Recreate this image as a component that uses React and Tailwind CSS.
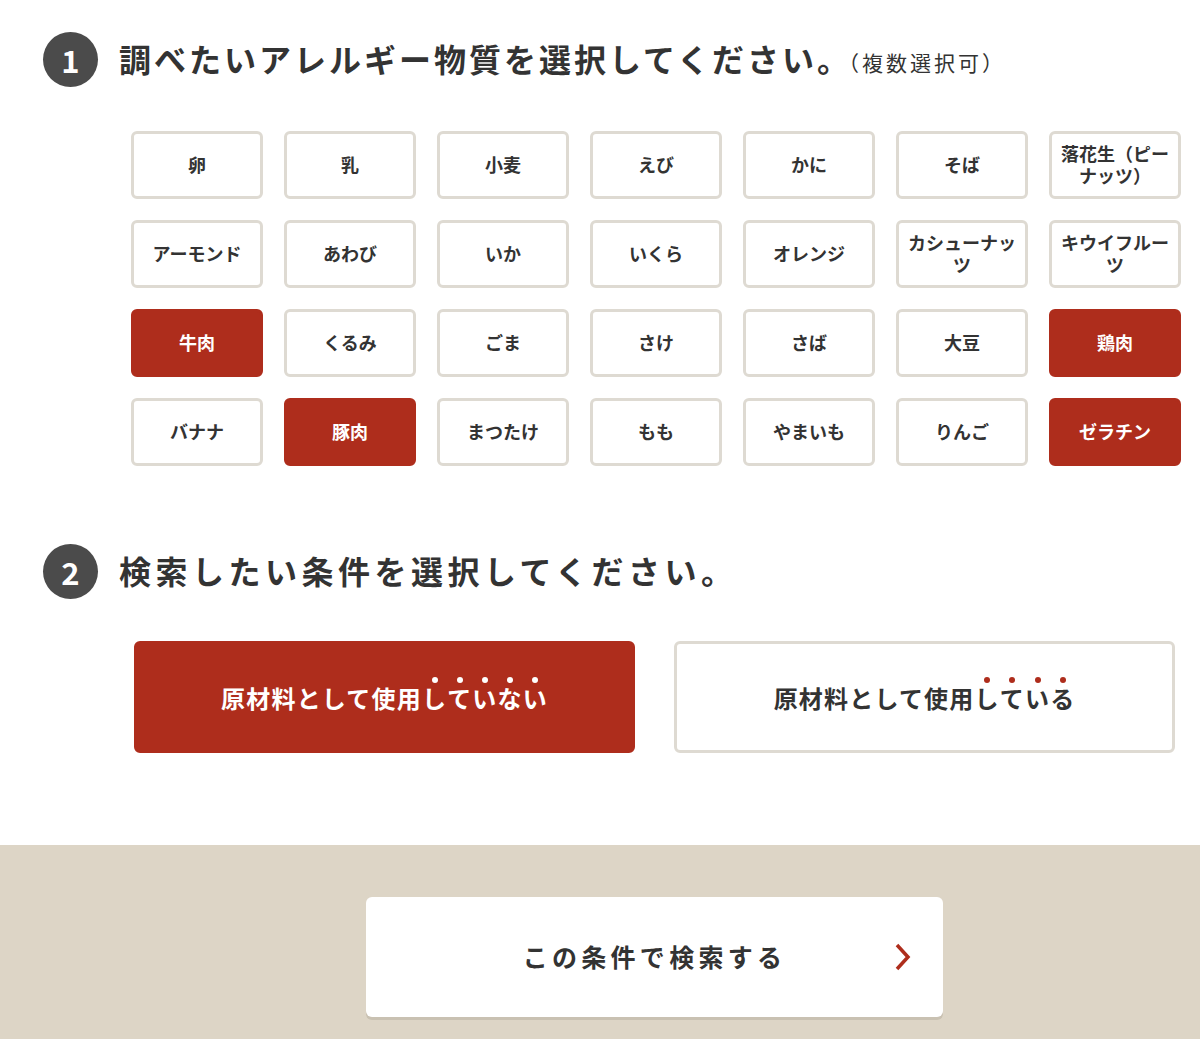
import React, { useState } from 'react';

const FONT = { fontFamily: '"Noto Sans CJK JP", "Noto Sans", sans-serif' };

const ALLERGENS = [
  '卵', '乳', '小麦', 'えび', 'かに', 'そば', '落花生（ピーナッツ）',
  'アーモンド', 'あわび', 'いか', 'いくら', 'オレンジ', 'カシューナッツ', 'キウイフルーツ',
  '牛肉', 'くるみ', 'ごま', 'さけ', 'さば', '大豆', '鶏肉',
  'バナナ', '豚肉', 'まつたけ', 'もも', 'やまいも', 'りんご', 'ゼラチン',
];

// Step number badge
const StepBadge = ({ n }) => (
  <div className="w-[55px] h-[55px] rounded-full bg-[#4b4b4b] text-white flex items-center justify-center text-[31px] font-bold shrink-0 leading-none">
    {n}
  </div>
);

// Text with emphasis dots above the last chars
const Dotted = ({ plain, dotted, dotColor }) => (
  <>
    {plain}
    {dotted.split('').map((ch, i) => (
      <span key={i} className="relative inline-block">
        <span className={`absolute left-1/2 -translate-x-1/2 -top-[3px] w-[6px] h-[6px] rounded-full ${dotColor}`} />
        {ch}
      </span>
    ))}
  </>
);

const App = () => {
  const [selected, setSelected] = useState(['牛肉', '鶏肉', '豚肉', 'ゼラチン']);
  const [mode, setMode] = useState('not');

  const toggle = (name) =>
    setSelected((s) => (s.includes(name) ? s.filter((x) => x !== name) : [...s, name]));

  return (
    <div className="w-[1200px] bg-white text-[#333]" style={FONT}>
      {/* Step 1 */}
      <div className="pt-[32px] pl-[43px] flex items-center gap-[21px]">
        <StepBadge n="1" />
        <h2 className="text-[32px] font-bold tracking-[3px] leading-none flex items-end pb-[3px]">
          調べたいアレルギー物質を選択してください。
          <span className="text-[21px] font-normal tracking-[3px] ml-[-14px] mb-[1px]">（複数選択可）</span>
        </h2>
      </div>

      <div className="mt-[44px] ml-[131px] grid grid-cols-[repeat(7,132px)] gap-x-[21px] gap-y-[21px]">
        {ALLERGENS.map((name) => {
          const on = selected.includes(name);
          return (
            <button
              key={name}
              onClick={() => toggle(name)}
              className={`h-[68px] rounded-[6px] border-[3px] px-[7px] pb-[3px] flex items-center justify-center text-center text-[18px] font-bold leading-[22px] ${
                on ? 'bg-[#ae2d1c] border-[#ae2d1c] text-white' : 'bg-white border-[#dedad2] text-[#333]'
              }`}
            >
              {name}
            </button>
          );
        })}
      </div>

      {/* Step 2 */}
      <div className="mt-[78px] pl-[43px] flex items-center gap-[21px]">
        <StepBadge n="2" />
        <h2 className="text-[32px] font-bold tracking-[4.5px] leading-none pb-[3px]">検索したい条件を選択してください。</h2>
      </div>

      <div className="mt-[42px] ml-[134px] mr-[25px] grid grid-cols-2 gap-x-[39px]">
        <button
          onClick={() => setMode('not')}
          className={`h-[112px] rounded-[6px] border-[3px] flex items-center justify-center text-[24px] font-bold tracking-[1.2px] pt-[2px] ${
            mode === 'not' ? 'bg-[#ae2d1c] border-[#ae2d1c] text-white' : 'bg-white border-[#dedad2] text-[#333]'
          }`}
        >
          <span>
            <Dotted plain="原材料として使用" dotted="していない" dotColor={mode === 'not' ? 'bg-white' : 'bg-[#ae2d1c]'} />
          </span>
        </button>
        <button
          onClick={() => setMode('use')}
          className={`h-[112px] rounded-[6px] border-[3px] flex items-center justify-center text-[24px] font-bold tracking-[1.2px] pt-[2px] ${
            mode === 'use' ? 'bg-[#ae2d1c] border-[#ae2d1c] text-white' : 'bg-white border-[#dedad2] text-[#333]'
          }`}
        >
          <span>
            <Dotted plain="原材料として使用" dotted="している" dotColor={mode === 'use' ? 'bg-white' : 'bg-[#ae2d1c]'} />
          </span>
        </button>
      </div>

      {/* Search bar */}
      <div className="mt-[92px] bg-[#ddd5c6] pt-[52px] pb-[40px] pl-[134px] pr-[25px] flex justify-center">
        <button className="relative w-[577px] h-[120px] bg-white rounded-[6px] shadow-[0_3px_0_#c9c1b2] flex items-center justify-center text-[25px] font-bold tracking-[4.3px]">
          この条件で検索する
          <svg className="absolute right-[30px] top-1/2 -translate-y-1/2" width="20" height="30" viewBox="0 0 20 30" fill="none">
            <path d="M4 3 L15 15 L4 27" stroke="#ae2d1c" strokeWidth="3.5" />
          </svg>
        </button>
      </div>
    </div>
  );
};

export default App;
